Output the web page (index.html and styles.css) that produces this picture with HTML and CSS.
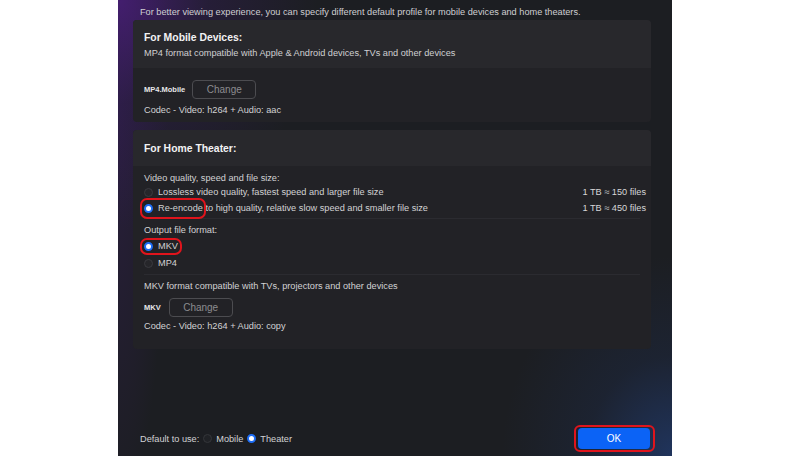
FILE: index.html
```html
<!DOCTYPE html>
<html lang="en">
<head>
<meta charset="utf-8">
<title>Default profile</title>
<link rel="stylesheet" href="styles.css">
</head>
<body>
<div class="dialog">
  <p class="intro">For better viewing experience, you can specify different default profile for mobile devices and home theaters.</p>

  <section class="card">
    <header class="card-head">
      <h2 class="card-title">For Mobile Devices:</h2>
      <p class="card-sub">MP4 format compatible with Apple &amp; Android devices, TVs and other devices</p>
    </header>
    <div class="card-body mobile-body">
      <div class="profile-row">
        <span class="profile-name">MP4.Mobile</span>
        <button class="change-btn">Change</button>
      </div>
      <p class="codec">Codec - Video: h264 + Audio: aac</p>
    </div>
  </section>

  <section class="card theater">
    <header class="card-head theater-head">
      <h2 class="card-title">For Home Theater:</h2>
    </header>
    <div class="card-body theater-body">
      <p class="label">Video quality, speed and file size:</p>
      <div class="option-row">
        <span class="radio"></span>
        <span class="opt-text">Lossless video quality, fastest speed and larger file size</span>
        <span class="opt-right">1 TB ≈ 150 files</span>
      </div>
      <div class="option-row gap2">
        <span class="radio checked"></span>
        <span class="opt-text">Re-encode to high quality, relative slow speed and smaller file size</span>
        <span class="opt-right">1 TB ≈ 450 files</span>
        <span class="mark mark-reencode"></span>
      </div>
      <div class="sep sep1"></div>
      <p class="label label-format">Output file format:</p>
      <div class="option-row mkv-row">
        <span class="radio checked"></span>
        <span class="opt-text">MKV</span>
        <span class="mark mark-mkv"></span>
      </div>
      <div class="option-row mp4-row">
        <span class="radio"></span>
        <span class="opt-text">MP4</span>
      </div>
      <div class="sep sep2"></div>
      <p class="label label-compat">MKV format compatible with TVs, projectors and other devices</p>
      <div class="profile-row theater-profile">
        <span class="profile-name">MKV</span>
        <button class="change-btn">Change</button>
      </div>
      <p class="codec codec-theater">Codec - Video: h264 + Audio: copy</p>
    </div>
  </section>

  <footer class="footer">
    <div class="default-use">
      <span class="default-label">Default to use:</span>
      <span class="radio dark"></span>
      <span>Mobile</span>
      <span class="radio checked"></span>
      <span>Theater</span>
    </div>
    <div class="ok-wrap">
      <button class="ok-btn">OK</button>
      <span class="mark mark-ok"></span>
    </div>
  </footer>
</div>
</body>
</html>
```

FILE: styles.css
```css
* { box-sizing: border-box; }

html, body {
  margin: 0;
  padding: 0;
  background: #ffffff;
  height: 456px;
  overflow: hidden;
}

body {
  font-family: "Liberation Sans", Arial, sans-serif;
  font-size: 9.2px;
  color: #d2d2d4;
}

p, h2 { margin: 0; }

.dialog {
  margin-left: 118px;
  width: 554px;
  height: 456px;
  padding: 5px 21px 0 15px;
  display: flex;
  flex-direction: column;
  background:
    radial-gradient(ellipse 200px 230px at 0 0, rgba(75, 30, 125, 0.8) 0%, rgba(55, 28, 95, 0.35) 45%, rgba(40, 25, 70, 0) 100%),
    radial-gradient(ellipse 50px 400px at 0 25%, rgba(60, 30, 100, 0.4) 0%, rgba(60, 30, 100, 0) 100%),
    radial-gradient(ellipse 170px 200px at 100% 100%, rgba(35, 70, 140, 0.55) 0%, rgba(30, 55, 110, 0.2) 50%, rgba(30, 50, 100, 0) 100%),
    #1c1e22;
}

.intro {
  padding-left: 7px;
  line-height: 15px;
  height: 15px;
  color: #cfcfd2;
}

.card {
  background: #222226;
  border-radius: 4px;
  overflow: hidden;
}

.card-head {
  background: #28282c;
  padding: 11px 11px 9px 11px;
}

.card-title {
  font-size: 10.4px;
  font-weight: bold;
  line-height: 14px;
  color: #f2f2f4;
}

.card-sub {
  margin-top: 2px;
  line-height: 12px;
  color: #d0d0d2;
}

.card-body {
  padding: 12px 11px 6px 11px;
}

.profile-row {
  display: flex;
  align-items: center;
  gap: 7px;
  height: 18px;
}

.profile-name {
  font-size: 7.5px;
  font-weight: bold;
  color: #e6e6e8;
}

.change-btn {
  width: 64px;
  height: 19px;
  border: 1px solid #4c4c50;
  border-radius: 4px;
  background: #222226;
  color: #8c8c90;
  font-family: "Liberation Sans", Arial, sans-serif;
  font-size: 10px;
  padding: 0;
}

.codec {
  margin-top: 6px;
  line-height: 12px;
}

.theater {
  margin-top: 8px;
}

.theater-head {
  padding: 12px 11px 10px;
}

.theater-body {
  padding: 6px 5px 17px 11px;
}

.label {
  line-height: 12px;
}

.option-row {
  position: relative;
  display: flex;
  align-items: center;
  height: 14px;
  margin-top: 1px;
}

.option-row.gap2 { margin-top: 2px; }

.opt-text { margin-left: 5px; flex: 1; }

.opt-right { color: #d6d6d8; }

.radio {
  width: 9px;
  height: 9px;
  border-radius: 50%;
  border: 1px solid #3a3a3f;
  background: #26262a;
  flex: none;
}

.radio.checked {
  border: 2.5px solid #1c6cf5;
  background: #ffffff;
}

.radio.dark {
  border-color: #34363a;
  background: #202226;
}

.sep {
  height: 1px;
  background: #2b2b30;
  margin-right: 6px;
}

.sep1 { margin-top: 3px; }

.label-format { margin-top: 5px; }

.mkv-row { margin-top: 3px; }
.mp4-row { margin-top: 3px; }

.sep2 { margin-top: 4px; }

.label-compat { margin-top: 5px; }

.theater-profile { margin-top: 6px; gap: 8px; }

.codec-theater { margin-top: 4px; }

.mark {
  position: absolute;
  border: 2px solid #e0141c;
  border-radius: 7px;
  pointer-events: none;
}

.mark-reencode { left: -4px; top: -3px; width: 66px; height: 21px; }
.mark-mkv { left: -4px; top: -1px; width: 42px; height: 17px; }

.footer {
  margin-top: auto;
  display: flex;
  align-items: center;
  justify-content: space-between;
  padding: 0 1px 7px 7px;
}

.default-use {
  display: flex;
  align-items: center;
  gap: 4px;
}

.ok-wrap {
  position: relative;
}

.ok-btn {
  display: block;
  width: 72px;
  height: 21px;
  border: none;
  border-radius: 4px;
  background: #0b63f6;
  color: #ffffff;
  font-family: "Liberation Sans", Arial, sans-serif;
  font-size: 10px;
  padding: 0;
}

.mark-ok { left: -4px; top: -3px; width: 81px; height: 27px; border-radius: 6px; }
```
